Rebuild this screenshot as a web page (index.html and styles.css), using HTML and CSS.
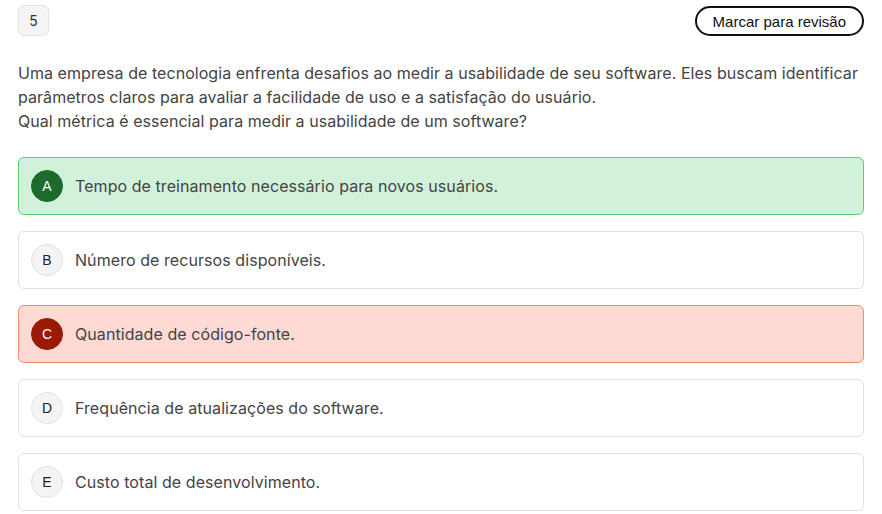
FILE: index.html
```html
<!DOCTYPE html>
<html lang="pt">
<head>
<meta charset="utf-8">
<link rel="stylesheet" href="styles.css">
</head>
<body>
<div class="page">
  <div class="top">
    <div class="num">5</div>
    <button class="mark">Marcar para revisão</button>
  </div>
  <p class="question">Uma empresa de tecnologia enfrenta desafios ao medir a usabilidade de seu software. Eles buscam identificar parâmetros claros para avaliar a facilidade de uso e a satisfação do usuário.<br>Qual métrica é essencial para medir a usabilidade de um software?</p>
  <div class="options">
    <div class="opt correct"><span class="letter">A</span><span class="txt">Tempo de treinamento necessário para novos usuários.</span></div>
    <div class="opt"><span class="letter">B</span><span class="txt">Número de recursos disponíveis.</span></div>
    <div class="opt wrong"><span class="letter">C</span><span class="txt">Quantidade de código-fonte.</span></div>
    <div class="opt"><span class="letter">D</span><span class="txt">Frequência de atualizações do software.</span></div>
    <div class="opt"><span class="letter">E</span><span class="txt">Custo total de desenvolvimento.</span></div>
  </div>
</div>
</body>
</html>
```
FILE: styles.css
```css
* { box-sizing: border-box; }
html, body { margin: 0; padding: 0; background: #fff; }
body { font-family: Inter, "Liberation Sans", sans-serif; color: #444; }
.page { padding: 5px 18px 0 18px; }
.top { display: flex; justify-content: space-between; align-items: flex-start; }
.num {
  width: 31px; height: 31px;
  border: 1px solid #e2e2e2; border-radius: 6px;
  background: #f4f4f4;
  display: flex; align-items: center; justify-content: center;
  font-size: 14px; color: #333;
}
.mark {
  margin-top: 1px;
  height: 30px; padding: 0 16px;
  border: 2px solid #111; border-radius: 15px;
  background: #fff;
  font-family: "Liberation Sans", Arial, sans-serif;
  font-size: 15px; color: #111;
}
.question {
  margin: 25px 0 0 0;
  font-size: 16px; line-height: 24px; color: #444;
  letter-spacing: 0.05px;
}
.options { margin-top: 24px; display: flex; flex-direction: column; gap: 16px; }
.opt {
  display: flex; align-items: center; gap: 12px;
  height: 58px; padding: 0 12px;
  border: 1px solid #e0e0e0; border-radius: 6px;
  background: #fff;
  font-size: 16px; color: #444;
  letter-spacing: 0.07px;
}
.letter {
  width: 32px; height: 32px; border-radius: 50%;
  flex: none;
  border: 1px solid #e0e0e0; background: #f4f4f4;
  display: flex; align-items: center; justify-content: center;
  font-family: "Liberation Sans", Arial, sans-serif;
  font-size: 14px; color: #222; letter-spacing: 0;
}
.opt.correct { background: #d1f1da; border-color: #5ccd73; }
.opt.correct .letter { background: #1c6a2c; border-color: #1c6a2c; color: #fff; }
.opt.wrong { background: #ffdad4; border-color: #f7896f; }
.opt.wrong .letter { background: #9a1a06; border-color: #9a1a06; color: #fff; }
```
